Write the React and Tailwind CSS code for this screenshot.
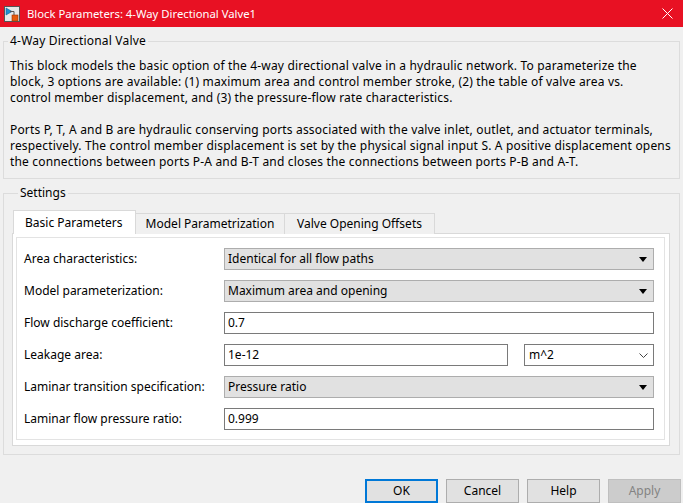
import React from "react";

const Arrow = () => (
  <svg width="8" height="5" viewBox="0 0 8 5" className="shrink-0">
    <path d="M0 0H8L4 5Z" fill="#000" />
  </svg>
);

const Chevron = () => (
  <svg width="9" height="5" viewBox="0 0 9 5" className="shrink-0">
    <path d="M0.5 0.5L4.5 4.5L8.5 0.5" fill="none" stroke="#444" strokeWidth="1" />
  </svg>
);

const Select = ({ value }) => (
  <div className="flex-1 h-[22px] flex items-center justify-between bg-[#e1e1e1] border border-[#adadad] pl-[3px] pr-[6px]">
    <span>{value}</span>
    <Arrow />
  </div>
);

const Input = ({ value, className = "flex-1" }) => (
  <div className={`${className} h-[22px] flex items-center bg-white border border-[#7a7a7a] pl-[3px]`}>
    <span>{value}</span>
  </div>
);

const Row = ({ label, children }) => (
  <div className="flex items-center h-[22px]">
    <div className="w-[200px] shrink-0">{label}</div>
    {children}
  </div>
);

export default function App() {
  return (
    <div className="w-[683px] h-[503px] overflow-hidden bg-[#f0f0f0] text-[12px] leading-[16px] text-black font-['Noto_Sans',sans-serif]">
      {/* Title bar */}
      <div className="h-[27px] bg-[#e81123] flex items-center text-white">
        <svg width="16" height="16" viewBox="0 0 16 16" className="ml-[4px]">
          <rect x="0.5" y="0.5" width="15" height="15" fill="#e8e8e8" stroke="#555" />
          <path d="M2 2L8 5.5L2 9Z" fill="#1e90d0" stroke="#0d5f99" strokeWidth="0.6" />
          <path d="M6 5.5H10V10" fill="none" stroke="#555" strokeWidth="1" />
          <rect x="8" y="9" width="6" height="6" fill="#e8590c" stroke="#9a3300" strokeWidth="0.6" />
        </svg>
        <span className="ml-[7px] text-[11.3px]">Block Parameters: 4-Way Directional Valve1</span>
        <svg width="11" height="11" viewBox="0 0 11 11" className="ml-auto mr-[10px]">
          <path d="M0.5 0.5L10.5 10.5M10.5 0.5L0.5 10.5" stroke="#fff" strokeWidth="1" />
        </svg>
      </div>

      {/* Description group */}
      <fieldset className="mt-[6px] ml-[3px] mr-[3px] border border-[#dcdcdc] pl-[6px] pr-[6px] pb-[8px]">
        <legend className="px-[2px] -ml-[2px] tracking-[0.2px]">4-Way Directional Valve</legend>
        <div className="mt-[9px] whitespace-nowrap tracking-[0.17px]">
          <div>This block models the basic option of the 4-way directional valve in a hydraulic network. To parameterize the</div>
          <div>block, 3 options are available: (1) maximum area and control member stroke, (2) the table of valve area vs.</div>
          <div>control member displacement, and (3) the pressure-flow rate characteristics.</div>
          <div className="h-[16px]"></div>
          <div>Ports P, T, A and B are hydraulic conserving ports associated with the valve inlet, outlet, and actuator terminals,</div>
          <div>respectively. The control member displacement is set by the physical signal input S. A positive displacement opens</div>
          <div>the connections between ports P-A and B-T and closes the connections between ports P-B and A-T.</div>
        </div>
      </fieldset>

      {/* Settings group */}
      <fieldset className="mt-[6px] ml-[3px] mr-[3px] border border-[#dcdcdc] pl-[8px] pr-[9px] pb-[8px]">
        <legend className="px-[2px] ml-[6px]">Settings</legend>
        <div className="mt-[9px]">
          {/* Tabs */}
          <div className="flex items-end h-[24px] pl-[1px] relative z-10">
            <div className="h-[24px] px-[11px] flex items-center bg-white border border-[#d9d9d9] border-b-0 w-[123px]">
              Basic Parameters
            </div>
            <div className="h-[21px] flex items-center justify-center bg-[#f0f0f0] border border-[#d9d9d9] border-l-0 border-b-0 w-[149px]">
              Model Parametrization
            </div>
            <div className="h-[21px] flex items-center justify-center bg-[#f0f0f0] border border-[#d9d9d9] border-l-0 border-b-0 w-[150px]">
              Valve Opening Offsets
            </div>
          </div>
          {/* Frame */}
          <div className="-mt-[1px] border border-[#d9d9d9] bg-white pt-[3px] pl-[3px] pr-[4px] pb-[5px]">
            <div className="border border-[#e3e3e3] bg-white pl-[7px] pr-[10px] pt-[10px] pb-[9px] flex flex-col gap-[10px]">
              <Row label="Area characteristics:">
                <Select value="Identical for all flow paths" />
              </Row>
              <Row label="Model parameterization:">
                <Select value="Maximum area and opening" />
              </Row>
              <Row label="Flow discharge coefficient:">
                <Input value="0.7" />
              </Row>
              <Row label="Leakage area:">
                <Input value="1e-12" className="w-[284px]" />
                <div className="ml-[16px] flex-1 h-[22px] flex items-center justify-between bg-white border border-[#7a7a7a] pl-[4px] pr-[5px]">
                  <span>m^2</span>
                  <Chevron />
                </div>
              </Row>
              <Row label="Laminar transition specification:">
                <Select value="Pressure ratio" />
              </Row>
              <Row label="Laminar flow pressure ratio:">
                <Input value="0.999" />
              </Row>
            </div>
          </div>
        </div>
      </fieldset>

      {/* Buttons */}
      <div className="mt-[24px] flex justify-end gap-[8px] pr-[2px]">
        <div className="w-[73px] h-[24px] flex items-center justify-center bg-[#e1e1e1] border-2 border-[#0078d7]">OK</div>
        <div className="w-[73px] h-[24px] flex items-center justify-center bg-[#e1e1e1] border border-[#adadad]">Cancel</div>
        <div className="w-[73px] h-[24px] flex items-center justify-center bg-[#e1e1e1] border border-[#adadad]">Help</div>
        <div className="w-[73px] h-[24px] flex items-center justify-center bg-[#cccccc] border border-[#bfbfbf] text-[#838383]">Apply</div>
      </div>
    </div>
  );
}
